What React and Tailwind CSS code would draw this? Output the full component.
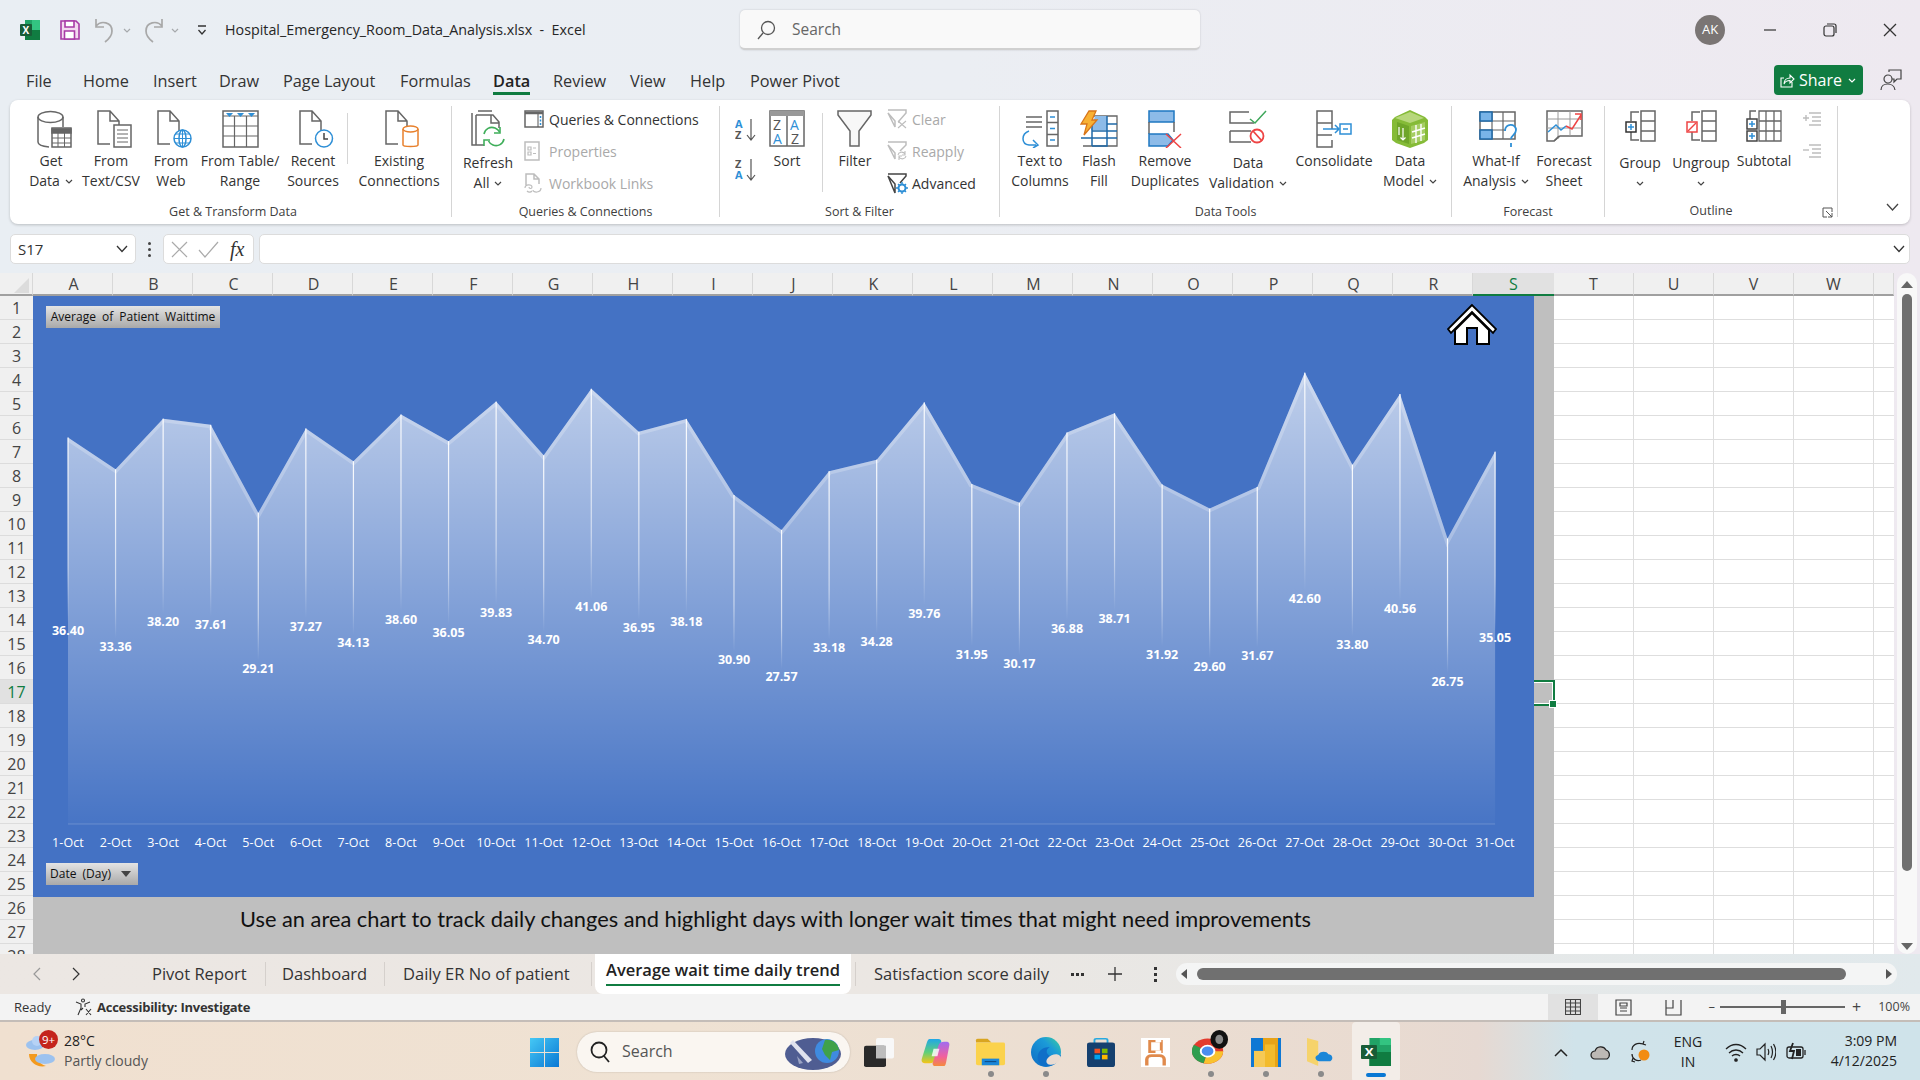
import React from 'react'

const G = '#666666'
const BLUE = '#2e8fd6'

const values = [36.40,33.36,38.20,37.61,29.21,37.27,34.13,38.60,36.05,39.83,34.70,41.06,36.95,38.18,30.90,27.57,33.18,34.28,39.76,31.95,30.17,36.88,38.71,31.92,29.60,31.67,42.60,33.80,40.56,26.75,35.05]
const cols = ['A','B','C','D','E','F','G','H','I','J','K','L','M','N','O','P','Q','R','S']
const rows = Array.from({ length: 28 }, (_, i) => i + 1)

const Svg = ({ w, h, children, className = '', stroke = G, sw = 1.5 }) => (
  <svg width={w} height={h} viewBox={`0 0 ${w} ${h}`} fill="none" stroke={stroke} strokeWidth={sw} className={`shrink-0 ${className}`}>
    {children}
  </svg>
)

const Caret = ({ className = '' }) => (
  <svg width="8" height="5" viewBox="0 0 8 5" fill="none" stroke="#444" strokeWidth="1.2" className={`inline-block ${className}`}><path d="M1 1l3 3 3-3" /></svg>
)

const Doc = ({ x = 0, y = 0, h = 34 }) => (
  <path d={`M${x + 22} ${y + 27}V${y + 11}l-9-10H${x + 1}V${y + h}h12 M${x + 13} ${y + 1}v10h9`} />
)

const GetDataIcon = () => (
  <Svg w={35} h={38}>
    <ellipse cx="13.5" cy="7" rx="12.5" ry="5.5" />
    <path d="M1 7v25c0 3 6 4.500 11 5M26 7v10" />
    <rect x="15" y="18" width="19" height="19" fill="#fff" />
    <path d="M15 19h19v4H15z" fill={G} />
    <path d="M15 28h19M15 33h19M21 23v14M27.5 23v14" strokeWidth="1" />
  </Svg>
)
const TextCsvIcon = () => (
  <Svg w={35} h={38}>
    <Doc />
    <path d="M17 15h17v22H17z" fill="#fff" />
    <path d="M20 20h11M20 24h11M20 28h11M20 32h11" strokeWidth="1" />
  </Svg>
)
const WebIcon = () => (
  <Svg w={35} h={38}>
    <Doc />
    <g stroke={BLUE}>
      <circle cx="25.5" cy="28.5" r="8.5" fill="#fff" />
      <ellipse cx="25.5" cy="28.5" rx="3.5" ry="8.5" />
      <path d="M17 28.5h17M18.5 24h14M18.5 33h14M25.5 20v17" strokeWidth="1" />
    </g>
  </Svg>
)
const TableIcon = () => (
  <Svg w={37} h={38}>
    <rect x="1" y="1" width="35" height="36" />
    <path d="M1 6h35M1 16h35M1 26h35M12.5 6v31M24.5 6v31" strokeWidth="1.2" />
    <path d="M4 3h7l-3.5 4zM15 3h7l-3.5 4zM26 3h7l-3.5 4z" fill={BLUE} stroke="none" />
  </Svg>
)
const RecentIcon = () => (
  <Svg w={35} h={38}>
    <Doc />
    <circle cx="25" cy="28.5" r="8.5" fill="#fff" stroke={BLUE} />
    <path d="M25 23v6h4" stroke="#444" />
  </Svg>
)
const ExistingIcon = () => (
  <Svg w={35} h={38}>
    <Doc />
    <g stroke="#e8802c" fill="#fff">
      <path d="M18 19v16c0 2 15 2 15 0V19" />
      <ellipse cx="25.5" cy="19" rx="7.5" ry="3" />
    </g>
  </Svg>
)
const RefreshIcon = () => (
  <Svg w={35} h={38}>
    <path d="M7 1h14M1 3v32h5M5 5v30h8M5 5h17l6 7v6M20 5v8h8" />
    <g stroke="#3fae5a" strokeWidth="1.6">
      <path d="M13 24c1-5 6-8 11-6 2 .8 3.5 2 4.5 4M33 29c-1 5-6 8-11 6-2-.8-3.5-2-4.5-4" />
      <path d="M29 17v6h-6M13 36v-6h6" />
    </g>
  </Svg>
)
const QueriesIcon = () => (
  <Svg w={20} h={18}>
    <rect x="1" y="1" width="18" height="16" />
    <path d="M1 3h18" strokeWidth="2.5" />
    <path d="M14 4v13" stroke="#555" strokeWidth="1" />
    <path d="M16.5 6v2M16.5 9.5v2M16.5 13v2" stroke={BLUE} strokeWidth="1.5" />
  </Svg>
)
const PropsIcon = () => (
  <Svg w={16} h={20} stroke="#bdbdbd">
    <rect x="1" y="1" width="14" height="18" />
    <path d="M4 6h3v3H4zM9 7h3M4 11h3v3H4zM9 12.5h3" strokeWidth="1.2" />
  </Svg>
)
const LinksIcon = () => (
  <Svg w={18} h={20} stroke="#bdbdbd">
    <path d="M2 12V1h8l5 5v5M10 1v5h5" />
    <path d="M1 15c0-4 7-4 7-1 0 2-3 2-3 0M17 15c0 5-8 5-8 2M3 18c2 2 4 1 5 0" strokeWidth="1.2" />
  </Svg>
)
const SortAz = ({ top, bottom }) => (
  <svg width="22" height="24" viewBox="0 0 22 24" className="shrink-0">
    <text x="0" y="10" fontSize="11" fontWeight="700" fontFamily="'Open Sans'" fill={top === 'A' ? BLUE : '#555'}>{top}</text>
    <text x="0" y="21" fontSize="11" fontWeight="700" fontFamily="'Open Sans'" fill={bottom === 'A' ? BLUE : '#555'}>{bottom}</text>
    <path d="M16 1v21M12 17l4 5 4-5" fill="none" stroke="#555" strokeWidth="1.2" />
  </svg>
)
const SortIcon = () => (
  <svg width="36" height="37" viewBox="0 0 36 37" className="shrink-0">
    <rect x="1" y="1" width="34" height="35" fill="#fff" stroke={G} strokeWidth="1.5" />
    <rect x="1" y="1" width="34" height="5" fill="#999" />
    <path d="M18 6v30" stroke={G} strokeWidth="1.5" />
    <text x="4" y="20" fontSize="14" fontFamily="'Open Sans'" fill="#555">Z</text>
    <text x="4" y="34" fontSize="14" fontFamily="'Open Sans'" fill={BLUE}>A</text>
    <text x="21" y="20" fontSize="14" fontFamily="'Open Sans'" fill={BLUE}>A</text>
    <text x="22" y="34" fontSize="14" fontFamily="'Open Sans'" fill="#555">Z</text>
  </svg>
)
const FilterIcon = () => (
  <Svg w={36} h={37}>
    <path d="M1 1h33v4L22 21v15h-9V21L1 5z" fill="#f7f7f7" />
  </Svg>
)
const ClearIcon = () => (
  <Svg w={21} h={20} stroke="#bdbdbd">
    <path d="M1 1h18v3l-7 8v2M8 18v-6L1 4z" />
    <path d="M11 12l8 7M19 12l-8 7" strokeWidth="1.1" />
  </Svg>
)
const ReapplyIcon = () => (
  <Svg w={21} h={20} stroke="#bdbdbd">
    <path d="M1 1h18v3l-6 6M8 18v-6L1 4z" />
    <path d="M11 14c.5-3 5-4 7-1M19 15c-.5 3-5 4-7 1M18 10v4h-3M12 19v-4h3" strokeWidth="1.1" />
  </Svg>
)
const AdvancedIcon = () => (
  <Svg w={21} h={21} stroke="#444">
    <path d="M1 1h18v2l-6 7M8 20v-9L1 3z" />
    <circle cx="15" cy="15" r="3.5" stroke={BLUE} strokeWidth="2" />
    <path d="M15 9v3M15 18v3M9 15h3M18 15h3M11 11l2 2M17 17l2 2M19 11l-2 2M13 17l-2 2" stroke={BLUE} strokeWidth="1.4" />
  </Svg>
)
const TextColsIcon = () => (
  <Svg w={38} h={38}>
    <rect x="26" y="1" width="11" height="35" fill="#fff" />
    <path d="M26 12.5h11M26 24.5h11" />
    <path d="M29 7h5M29 18.5h5M29 30h5" stroke={BLUE} />
    <path d="M5 7h16M5 12h16M5 17h16" strokeWidth="1.3" />
    <path d="M8 21c-8 3-8 13 0 14h7M12 30l5 5-5 3" stroke={BLUE} />
  </Svg>
)
const FlashIcon = () => (
  <Svg w={38} h={38}>
    <path d="M11 6h26v30H3" strokeWidth="1.3" />
    <path d="M15 6h12v14H11z" fill="#8dbbe8" stroke="none" />
    <path d="M12 21h15M12 6v30M27 6v30h-15M1 28h36M27 21h10M27 14h10" stroke="#1f6aa8" strokeWidth="1.5" />
    <path d="M9 1h7l-4 9h5L4 25l3-11H1z" fill="#f8b133" stroke="#d8751a" strokeWidth="1.3" />
  </Svg>
)
const RemoveDupIcon = () => (
  <Svg w={34} h={38} stroke="#1f78c1">
    <path d="M1 1h25v11H1z" fill="#8dbbe8" />
    <path d="M1 12v12M26 12v10" stroke={G} />
    <path d="M1 24h19l5 6-5 6H1z" fill="#8dbbe8" />
    <path d="M18 24l15 14M33 24L18 38" stroke="#ee4444" />
  </Svg>
)
const ValidationIcon = () => (
  <Svg w={38} h={36}>
    <path d="M20 2H1v11h24M1 21h21M1 21v11h21" />
    <path d="M21 9l5 4L37 1" stroke="#3fa75b" />
    <circle cx="28" cy="26" r="6.5" stroke="#ee4444" strokeWidth="1.8" />
    <path d="M24 21l9 10" stroke="#ee4444" strokeWidth="1.8" />
  </Svg>
)
const ConsolidateIcon = () => (
  <Svg w={36} h={38}>
    <path d="M1 1h15v12H1zM1 13v12h15M1 25v12h15V30M16 13v6" />
    <path d="M7 19h16M19 15l4 4-4 4" stroke={BLUE} />
    <rect x="24" y="14" width="11" height="10" fill="#fff" stroke={BLUE} />
    <path d="M27 19h5" stroke={BLUE} />
  </Svg>
)
const ModelIcon = () => (
  <svg width="36" height="38" viewBox="0 0 36 38" className="shrink-0">
    <path d="M3 7L18 0l15 7 3 3v20l-4 3-14 5-14-5-4-3V10z" fill="#85bb37" />
    <path d="M3 8L18 2l14 6-14 5z" fill="#b7d77c" />
    <path d="M5 12l12 4v18L5 30z" fill="#6fa62a" />
    <path d="M19 16l14-4v18l-14 4z" fill="#a5cd63" />
    <path d="M20 22l13-4M20 28l13-4M24 15v18M29 14v17" stroke="#fff" strokeWidth="1.4" fill="none" />
    <path d="M11 18v12M8.5 27.5L11 30l2.5-2.5M7 17v8" stroke="#fff" strokeWidth="1.2" fill="none" />
  </svg>
)
const WhatIfIcon = () => (
  <Svg w={38} h={38}>
    <rect x="1" y="2" width="35" height="27" />
    <path d="M13 2v27M24 2v27M1 11h35M1 20h35" strokeWidth="1.2" />
    <path d="M1 2h12v9H1zM1 20h12v9H1z" fill="#79b4e8" stroke="#1f6aa8" />
    <path d="M26 21c0-8 11-8 11-1 0 5-5 5-5 9M32 33v4" stroke={BLUE} strokeWidth="1.8" fill="#fff" />
  </Svg>
)
const ForecastIcon = () => (
  <Svg w={37} h={38}>
    <path d="M1 1h35v25H14l-6 5H1z" />
    <path d="M12 1v28M24 1v25M1 9h35M1 18h35" strokeWidth="1" stroke="#9a9a9a" />
    <path d="M2 22l8-7 5 5 5-4" stroke={BLUE} />
    <path d="M20 16l6 3 9-14M29 4h6v6" stroke="#ee4444" />
    <path d="M8 31l5-5" />
  </Svg>
)
const Bracket = ({ tint }) => (
  <Svg w={31} h={32}>
    <path d="M14 2H6v9M6 20v10h8" />
    <rect x="16" y="1" width="14" height="30" fill="#fff" />
    <path d="M16 11h14M16 21h14" />
    {tint === 'plus' ? (
      <>
        <rect x="1" y="12" width="10" height="10" fill="#fff" stroke="#333" />
        <path d="M3 17h6M6 14v6" stroke={BLUE} />
      </>
    ) : (
      <>
        <rect x="1" y="12" width="10" height="10" fill="#fff" stroke="#ee4444" />
        <path d="M2 21l8-8" stroke="#ee4444" />
      </>
    )}
  </Svg>
)
const SubtotalIcon = () => (
  <Svg w={36} h={32}>
    <path d="M13 1h22v30H13zM13 11h22M13 21h22M20 1v30M28 1v30" strokeWidth="1.3" />
    <path d="M10 1H4v9" />
    <rect x="1" y="9" width="10" height="10" fill="#fff" stroke="#444" />
    <rect x="1" y="21" width="10" height="10" fill="#fff" stroke="#444" />
    <path d="M3 14h6M6 11v6M3 26h6M6 23v6" stroke={BLUE} />
  </Svg>
)
const ShowDetail = ({ minus }) => (
  <Svg w={18} h={14} stroke="#bdbdbd">
    <path d={minus ? 'M0 6h6' : 'M0 6h6M3 3v6'} strokeWidth="1.4" />
    <path d="M6 1h12M9 5h9M9 9h9M6 13h12" strokeWidth="1.3" />
  </Svg>
)

// one big ribbon button, label lines under the icon
const Big = ({ w, icon, lines, caret, below, iconClass = '' }) => (
  <div className={`flex flex-col items-center pt-1 ${w}`}>
    <div className={`flex h-[41px] w-full justify-center ${iconClass}`}>{icon}</div>
    <div className="flex flex-col items-center leading-[20px] whitespace-nowrap">
      {lines.map((l, i) => (
        <div key={l} className="flex items-center gap-[5px]">
          <span>{l}</span>
          {caret && i === lines.length - 1 && <Caret />}
        </div>
      ))}
      {below && <div className="flex h-5 items-center"><Caret /></div>}
    </div>
  </div>
)

const Small = ({ icon, label, off }) => (
  <div className={`flex h-7 items-center whitespace-nowrap ${off ? 'text-[#a9a9a9]' : ''}`}>
    <div className="flex w-[25px] shrink-0 justify-start">{icon}</div>
    <span>{label}</span>
  </div>
)

const Group = ({ w, label, children, labelClass = '' }) => (
  <div className={`flex h-[111px] shrink-0 flex-col border-r-[1.5px] border-[#d5d5d5] ${w}`}>
    <div className="flex h-[98px] shrink-0">{children}</div>
    <div className={`h-4 shrink-0 text-center text-[12.5px] leading-4 text-[#404040] ${labelClass}`}>{label}</div>
  </div>
)

const menu = [['File', 'w-[57px] ml-[26px]'], ['Home', 'w-[70px]'], ['Insert', 'w-[66px]'], ['Draw', 'w-[64px]'], ['Page Layout', 'w-[117px]'], ['Formulas', 'w-[93px]'], ['Data', 'w-[60px]'], ['Review', 'w-[77px]'], ['View', 'w-[60px]'], ['Help', 'w-[60px]'], ['Power Pivot', 'w-[100px]']]

const TitleBar = () => (
  <div className="flex h-[60px] items-center">
    <svg width="20" height="20" viewBox="0 0 20 20" className="ml-5 shrink-0">
      <path d="M5 0h14a1 1 0 011 1v18a1 1 0 01-1 1H5z" fill="#21a366" />
      <path d="M12 0h7a1 1 0 011 1v9h-8z" fill="#33c481" />
      <path d="M5 10h15v10H5z" fill="#107c41" />
      <rect x="0" y="4" width="12" height="12" rx="1" fill="#185c37" />
      <text x="2.5" y="13.5" fontSize="10" fontWeight="700" fill="#fff" fontFamily="'Open Sans'">X</text>
    </svg>
    <svg width="20" height="20" viewBox="0 0 20 20" fill="none" stroke="#a83aa6" strokeWidth="1.6" className="ml-5 shrink-0">
      <path d="M1 1h15l3 3v15H1z" fill="#f3d9f0" />
      <path d="M5 1h9v6H5zM4.5 11h10v8h-10z" fill="#fff" />
    </svg>
    <svg width="19" height="26" viewBox="0 0 19 26" fill="none" stroke="#a8a8a8" strokeWidth="1.7" className="ml-[15px] shrink-0">
      <path d="M1 2v8h8M1 9c5-6 16-4 16 5 0 4-3 8-7 11" />
    </svg>
    <Caret className="ml-[9px] opacity-40" />
    <svg width="19" height="26" viewBox="0 0 19 26" fill="none" stroke="#a8a8a8" strokeWidth="1.7" className="ml-[13px] shrink-0">
      <path d="M18 2v8h-8M18 9C13 3 2 5 2 14c0 4 3 8 7 11" />
    </svg>
    <Caret className="ml-[8px] opacity-40" />
    <svg width="10" height="11" viewBox="0 0 10 11" fill="none" stroke="#333" strokeWidth="1.3" className="ml-[18px] shrink-0">
      <path d="M1 1h8M1.5 5l3.5 4 3.5-4" />
    </svg>
    <div className="ml-[18px] w-[515px] text-[14.3px] whitespace-nowrap text-[#262626]">Hospital_Emergency_Room_Data_Analysis.xlsx&nbsp; - &nbsp;Excel</div>
    <div className="flex h-10 w-[460px] items-center rounded-[5px] border-b-2 border-b-[#d0d0d0] bg-[#f9f9f9] pt-[1px] shadow-[0_0_2px_rgba(0,0,0,0.18)]">
      <svg width="19" height="20" viewBox="0 0 19 20" fill="none" stroke="#555" strokeWidth="1.3" className="ml-[17px]">
        <circle cx="11" cy="8" r="6.5" /><path d="M6 13l-5 6" />
      </svg>
      <span className="ml-[16px] text-[15.5px] text-[#666]">Search</span>
    </div>
    <div className="ml-[495px] flex h-[30px] w-[30px] items-center justify-center rounded-full bg-[#7a7574] text-[13px] text-white">AK</div>
    <svg width="14" height="14" viewBox="0 0 14 14" fill="none" stroke="#333" strokeWidth="1.2" className="ml-[38px]"><path d="M1 7h12" /></svg>
    <svg width="14" height="14" viewBox="0 0 14 14" fill="none" stroke="#333" strokeWidth="1.2" className="ml-[46px]"><rect x="1" y="3" width="10" height="10" rx="2" /><path d="M4 1h7a2 2 0 012 2v7" /></svg>
    <svg width="14" height="14" viewBox="0 0 14 14" fill="none" stroke="#333" strokeWidth="1.3" className="ml-[46px]"><path d="M1 1l12 12M13 1L1 13" /></svg>
  </div>
)

const MenuBar = () => (
  <div className="flex h-10 items-center text-[16.3px] text-[#333]">
    {menu.map(([m, w]) => (
      <div key={m} className={`${w} relative top-[1px] whitespace-nowrap ${m === 'Data' ? 'font-semibold text-[#222]' : ''}`}>
        {m}
        {m === 'Data' && <div className="absolute top-[23px] left-0 h-[3px] w-[37px] bg-[#107c41]" />}
      </div>
    ))}
    <div className="ml-[924px] flex h-[30px] w-[89px] items-center rounded-[4px] bg-[#107c41] pl-[6px] text-[16px] font-medium text-white">
      <svg width="15" height="15" viewBox="0 0 15 15" fill="none" stroke="#fff" strokeWidth="1.1"><path d="M4 5H1v9h11V9M4 11c0-4 3-6 6-6V2l4 4-4 4V7.5c-2 0-5 1-6 3.5z" /></svg>
      <span className="ml-[4px]">Share</span>
      <svg width="8" height="5" viewBox="0 0 8 5" fill="none" stroke="#fff" strokeWidth="1.2" className="ml-[6px]"><path d="M1 1l3 3 3-3" /></svg>
    </div>
    <svg width="22" height="22" viewBox="0 0 22 22" fill="none" stroke="#444" strokeWidth="1.2" className="ml-[17px]">
      <circle cx="8" cy="10" r="4" /><path d="M1 21c0-8 13-8 14 0M9 3V1h12v9h-4l-3 3v-3h-2" />
    </svg>
  </div>
)

const Ribbon = () => (
  <div className="relative mx-[10px] flex h-[124px] rounded-[8px] bg-white pt-[6px] text-[14px] text-[#333] shadow-[0_1px_3px_rgba(0,0,0,0.2)]">
    <Group w="w-[442px]" label="Get & Transform Data" labelClass="pl-[5px]">
      <div className="w-[11px]" />
      <Big w="w-[60px]" icon={<GetDataIcon />} iconClass="pl-[6px]" lines={['Get', 'Data']} caret />
      <Big w="w-[60px]" icon={<TextCsvIcon />} iconClass="pl-[6px]" lines={['From', 'Text/CSV']} />
      <Big w="w-[60px]" icon={<WebIcon />} iconClass="pl-[6px]" lines={['From', 'Web']} />
      <Big w="w-[78px]" icon={<TableIcon />} lines={['From Table/', 'Range']} />
      <Big w="w-[68px]" icon={<RecentIcon />} iconClass="pl-[6px]" lines={['Recent', 'Sources']} />
      <div className="mt-[7px] h-[51px] border-l-[1.5px] border-[#d5d5d5]" />
      <Big w="w-[102px]" icon={<ExistingIcon />} iconClass="pl-[6px]" lines={['Existing', 'Connections']} />
    </Group>
    <Group w="w-[268px]" label="Queries & Connections">
      <Big w="w-[72px]" icon={<RefreshIcon />} iconClass="h-[43px]" lines={['Refresh', 'All']} caret />
      <div className="-mt-[1px] flex flex-col gap-1">
        <Small icon={<QueriesIcon />} label="Queries & Connections" />
        <Small icon={<PropsIcon />} label="Properties" off />
        <Small icon={<LinksIcon />} label="Workbook Links" off />
      </div>
    </Group>
    <Group w="w-[280px]" label="Sort & Filter">
      <div className="ml-[15px] flex flex-col gap-4 pt-[12px]">
        <SortAz top="A" bottom="Z" />
        <SortAz top="Z" bottom="A" />
      </div>
      <Big w="w-[65px] pr-[5px]" icon={<SortIcon />} lines={['Sort']} />
      <div className="mt-[7px] h-[79px] border-l-[1.5px] border-[#d5d5d5]" />
      <Big w="w-[64px]" icon={<FilterIcon />} lines={['Filter']} />
      <div className="-mt-[1px] flex flex-col gap-1">
        <Small icon={<ClearIcon />} label="Clear" off />
        <Small icon={<ReapplyIcon />} label="Reapply" off />
        <Small icon={<AdvancedIcon />} label="Advanced" />
      </div>
    </Group>
    <Group w="w-[452px]" label="Data Tools">
      <div className="w-[5px]" />
      <Big w="w-[70px]" icon={<TextColsIcon />} lines={['Text to', 'Columns']} />
      <Big w="w-[48px]" icon={<FlashIcon />} lines={['Flash', 'Fill']} />
      <Big w="w-[84px]" icon={<RemoveDupIcon />} lines={['Remove', 'Duplicates']} />
      <Big w="w-[82px]" icon={<ValidationIcon />} iconClass="h-[43px]" lines={['Data', 'Validation']} caret />
      <Big w="w-[90px]" icon={<ConsolidateIcon />} lines={['Consolidate']} />
      <Big w="w-[62px]" icon={<ModelIcon />} lines={['Data', 'Model']} caret />
    </Group>
    <Group w="w-[153px]" label="Forecast">
      <div className="w-[10px]" />
      <Big w="w-[68px]" icon={<WhatIfIcon />} iconClass="pl-[4px]" lines={['What-If', 'Analysis']} caret />
      <Big w="w-[68px]" icon={<ForecastIcon />} lines={['Forecast', 'Sheet']} />
    </Group>
    <Group w="w-[233px]" label="Outline" labelClass="-mt-[1px] pr-[20px]">
      <Big w="w-[70px]" icon={<Bracket tint="plus" />} iconClass="h-[43px]" lines={['Group']} below />
      <Big w="w-[52px]" icon={<Bracket tint="minus" />} iconClass="h-[43px]" lines={['Ungroup']} below />
      <Big w="w-[74px]" icon={<SubtotalIcon />} lines={['Subtotal']} />
      <div className="ml-[2px] flex flex-col gap-[18px] pt-[6px]">
        <ShowDetail />
        <ShowDetail minus />
      </div>
    </Group>
    <svg width="11" height="11" viewBox="0 0 11 11" fill="none" stroke="#555" strokeWidth="1" className="absolute top-[107px] left-[1812px]"><path d="M10 5V1H1v9h4M4 4l6 6M6 10h4V6" /></svg>
    <svg width="13" height="8" viewBox="0 0 13 8" fill="none" stroke="#444" strokeWidth="1.3" className="absolute top-[103px] left-[1876px]"><path d="M1 1l5.5 6L12 1" /></svg>
  </div>
)

const FormulaBar = () => (
  <div className="mt-[10px] flex h-[30px] items-center pl-[10px] text-[15px] text-[#333]">
    <div className="flex h-full w-[126px] items-center justify-between rounded-[5px] border border-[#dcdcdc] bg-white px-[7px]">
      <span>S17</span>
      <svg width="12" height="8" viewBox="0 0 12 8" fill="none" stroke="#333" strokeWidth="1.3"><path d="M1 1l5 5.5L11 1" /></svg>
    </div>
    <div className="flex w-[27px] flex-col items-center gap-[3px]">
      <i className="h-[3px] w-[3px] rounded-full bg-[#444]" /><i className="h-[3px] w-[3px] rounded-full bg-[#444]" /><i className="h-[3px] w-[3px] rounded-full bg-[#444]" />
    </div>
    <div className="flex h-full w-[91px] items-center rounded-[5px] border border-[#dcdcdc] bg-white pl-[7px]">
      <svg width="17" height="17" viewBox="0 0 17 17" fill="none" stroke="#aaa" strokeWidth="1.2"><path d="M1 1l15 15M16 1L1 16" /></svg>
      <svg width="21" height="17" viewBox="0 0 21 17" fill="none" stroke="#aaa" strokeWidth="1.2" className="ml-[10px]"><path d="M1 9l6 7L20 1" /></svg>
      <span className="ml-[11px] font-['Liberation_Serif',serif] text-[20px] leading-none text-[#333] italic">fx</span>
    </div>
    <div className="ml-[5px] flex h-full w-[1651px] items-center justify-end rounded-[5px] border border-[#dcdcdc] bg-white pr-[4px]">
      <svg width="12" height="8" viewBox="0 0 12 8" fill="none" stroke="#333" strokeWidth="1.3"><path d="M1 1l5 5.5L11 1" /></svg>
    </div>
  </div>
)

const ColHeader = () => (
  <div className="flex h-[23px] text-[16px] leading-[23px] text-[#444]">
    <div className="relative h-full w-[33px] border-r border-b-2 border-r-[#d8d8d8] border-b-[#a0a0a0] bg-[#f0f0f0]">
      <svg width="16" height="16" viewBox="0 0 16 16" className="absolute top-[5px] left-[14px]"><path d="M15 0v15H0z" fill="#dcdcdc" /></svg>
    </div>
    {cols.map((c) => (
      <div key={c} className={c === 'S' ? 'h-full w-[81px] border-b-2 border-[#107c41] bg-[#e1e1e1] text-center text-[#107c41]' : 'h-full w-[80px] border-r border-b-2 border-r-[#d8d8d8] border-b-[#a0a0a0] bg-[#f0f0f0] pl-[2px] text-center'}>{c}</div>
    ))}
    {['T', 'U', 'V', 'W', ''].map((c) => (
      <div key={c} className={`h-full border-r border-b-2 border-r-[#d8d8d8] border-b-[#a0a0a0] bg-[#f0f0f0] text-center ${c ? 'w-[80px]' : 'w-[20px]'}`}>{c}</div>
    ))}
  </div>
)

const X0 = 35
const STEP = 47.57
const px = (i) => X0 + i * STEP
const py = (v) => 141.5 + (36.4 - v) * 10.46
const BASE = 528

const Chart = () => {
  const line = values.map((v, i) => `${px(i).toFixed(1)},${py(v).toFixed(1)}`).join(' ')
  const area = `${X0},${BASE} ${line} ${px(30).toFixed(1)},${BASE}`
  return (
    <svg width="1501" height="601" viewBox="0 0 1501 601" className="block">
      <defs>
        <linearGradient id="fade" gradientUnits="userSpaceOnUse" x1="0" y1="75" x2="0" y2="528">
          <stop offset="0" stopColor="#fff" stopOpacity="0.66" />
          <stop offset="1" stopColor="#fff" stopOpacity="0.02" />
        </linearGradient>
        <linearGradient id="drop" x1="0" y1="0" x2="0" y2="1">
          <stop offset="0" stopColor="#fff" stopOpacity="0.95" />
          <stop offset="0.7" stopColor="#fff" stopOpacity="0.55" />
          <stop offset="1" stopColor="#fff" stopOpacity="0" />
        </linearGradient>
        <clipPath id="areaclip"><polygon points={area} /></clipPath>
      </defs>
      <polygon points={area} fill="url(#fade)" />
      <polyline points={line} fill="none" stroke="#fff" strokeOpacity="0.22" strokeWidth="7" clipPath="url(#areaclip)" />
      <path d={`M${X0} ${BASE}H${px(30)}`} stroke="#fff" strokeOpacity="0.2" />
      {values.map((v, i) => {
        const y = py(v)
        return <rect key={i} x={px(i) - 0.6} y={y} width="1.2" height={(BASE - y) / 2 - 8} fill="url(#drop)" />
      })}
      <g className="font-['Open_Sans']" fill="#fff" textAnchor="middle">
        {values.map((v, i) => (
          <text key={i} x={px(i)} y={(py(v) + BASE) / 2 + 4.5} fontSize="12.5" fontWeight="700">{v.toFixed(2)}</text>
        ))}
        {values.map((v, i) => (
          <text key={i} x={px(i)} y="551" fontSize="12.5" fontWeight="500" letterSpacing="0.1">{i + 1}-Oct</text>
        ))}
      </g>
      <g transform="translate(1415 8)">
        <path d="M24 1L0 25l3 4 21-21 21 21 3-4z" fill="#fff" stroke="#000" strokeWidth="1.8" />
        <path d="M7 26L24 9l17 17v14H29V24h-10v16H7z" fill="#fff" stroke="#000" strokeWidth="2" />
      </g>
    </svg>
  )
}

const Sheet = () => (
  <div className="relative flex h-[658px] overflow-hidden">
    <div className="w-[33px] shrink-0 bg-[#f0f0f0]">
      {rows.map((r) => (
        <div key={r} className={`h-6 border-b border-[#dcdcdc] text-center text-[16px] leading-6 ${r === 17 ? 'bg-[#e1e1e1] text-[#107c41]' : 'text-[#444]'}`}>{r}</div>
      ))}
    </div>
    <div className="relative w-[1521px] shrink-0 bg-[#bfbfbf]">
      <div className="relative h-[601px] w-[1501px] bg-[#4472c4]">
        <Chart />
        <div className="absolute top-[10px] left-[13px] flex h-[22px] w-[174px] items-center justify-center bg-gradient-to-b from-[#e4e4e4] to-[#a9a9a9] text-[12px] whitespace-nowrap text-[#111] [word-spacing:3px]">Average of Patient Waittime</div>
        <div className="absolute top-[567px] left-[13px] flex h-[22px] w-[92px] items-center bg-gradient-to-b from-[#e4e4e4] to-[#a9a9a9] pl-[4px] text-[12px] whitespace-nowrap text-[#111] [word-spacing:3px]">
          Date (Day)
          <span className="ml-[10px] h-0 w-0 border-x-[5px] border-t-[6px] border-x-transparent border-t-[#444]" />
        </div>
      </div>
      <div className="flex h-[44px] items-center pl-[207px] font-['Lato',sans-serif] text-[21.8px] whitespace-nowrap text-[#111]">Use an area chart to track daily changes and highlight days with longer wait times that might need improvements</div>
      <div className="absolute top-[384px] left-[1501px] h-[26px] w-[21px] border-y-2 border-r-2 border-y-[#107c41] border-r-[#107c41] shadow-[inset_0_1px_0_#fff,inset_-1px_0_0_#fff,inset_0_-1px_0_#fff]" />
      <div className="absolute top-[405px] left-[1517px] h-[6px] w-[6px] bg-[#107c41] ring-1 ring-white" />
    </div>
    <div className="w-[340px] shrink-0 bg-white">
      {rows.map((r) => (
        <div key={r} className="flex h-6 border-b border-[#dedede]">
          <div className="w-[80px] border-r border-[#dedede]" />
          <div className="w-[80px] border-r border-[#dedede]" />
          <div className="w-[80px] border-r border-[#dedede]" />
          <div className="w-[80px] border-r border-[#dedede]" />
          <div className="w-[20px]" />
        </div>
      ))}
    </div>
  </div>
)

const VScroll = () => (
  <div className="flex w-[26px] shrink-0 justify-center">
    <div className="flex h-[681px] w-5 flex-col items-center rounded-full bg-[#f8f8f8]">
      <span className="mt-[8px] h-0 w-0 border-x-[6px] border-b-[7px] border-x-transparent border-b-[#666]" />
      <div className="mt-[6px] h-[577px] w-[10px] rounded-full bg-[#707070]" />
      <span className="mt-auto mb-[4px] h-0 w-0 border-x-[6px] border-t-[7px] border-x-transparent border-t-[#666]" />
    </div>
  </div>
)

const Tabs = () => (
  <div className="flex h-10 items-center bg-gradient-to-r from-[#ece7e3] via-[#ebe7e3] to-[#e1e9ec] text-[16.5px] whitespace-nowrap text-[#333]">
    <svg width="9" height="14" viewBox="0 0 9 14" fill="none" stroke="#999" strokeWidth="1.2" className="ml-[32px]"><path d="M8 1L2 7l6 6" /></svg>
    <svg width="9" height="14" viewBox="0 0 9 14" fill="none" stroke="#333" strokeWidth="1.2" className="ml-[31px]"><path d="M1 1l6 6-6 6" /></svg>
    <div className="ml-[71px] w-[113px] pt-[1px]">Pivot Report</div>
    <div className="h-[24px] border-l border-[#d5d0cc]" />
    <div className="w-[118px] pl-[16px] pt-[1px]">Dashboard</div>
    <div className="h-[24px] border-l border-[#d5d0cc]" />
    <div className="w-[206px] pl-[18px] pt-[1px]">Daily ER No of patient</div>
    <div className="h-[24px] border-l border-[#d5d0cc]" />
    <div className="relative ml-[3px] flex h-10 w-[256px] justify-center rounded-b-[8px] bg-white pt-[4px] font-semibold text-[#222]">
      Average wait time daily trend
      <div className="absolute bottom-[8px] left-[11px] h-[2.5px] w-[234px] bg-[#107c41]" />
    </div>
    <div className="ml-[4px] h-[24px] border-l border-[#d5d0cc]" />
    <div className="w-[215px] pl-[18px] pt-[1px]">Satisfaction score daily</div>
    <div className="flex gap-[2px]"><i className="h-[3px] w-[3px] bg-[#333]" /><i className="h-[3px] w-[3px] bg-[#333]" /><i className="h-[3px] w-[3px] bg-[#333]" /></div>
    <svg width="14" height="14" viewBox="0 0 14 14" stroke="#333" strokeWidth="1.3" className="ml-[24px]"><path d="M7 0v14M0 7h14" /></svg>
    <div className="ml-[32px] flex flex-col gap-[3px]"><i className="h-[3px] w-[3px] bg-[#333]" /><i className="h-[3px] w-[3px] bg-[#333]" /><i className="h-[3px] w-[3px] bg-[#333]" /></div>
    <div className="ml-[19px] flex h-[22px] w-[721px] items-center rounded-full bg-[#f4f5f5] px-[5px]">
      <span className="h-0 w-0 border-y-[5px] border-r-[6px] border-y-transparent border-r-[#555]" />
      <div className="ml-[10px] h-3 w-[649px] rounded-full bg-[#707070]" />
      <span className="ml-auto h-0 w-0 border-y-[5px] border-l-[6px] border-y-transparent border-l-[#555]" />
    </div>
  </div>
)

const StatusBar = () => (
  <div className="flex h-[28px] items-center border-b-2 border-[#c4bdb8] bg-[#f3f3f3] text-[13px] text-[#333]">
    <span className="ml-[14px] pt-[1px]">Ready</span>
    <svg width="18" height="18" viewBox="0 0 18 18" fill="none" stroke="#333" strokeWidth="1.1" className="ml-[24px]">
      <circle cx="8" cy="2.5" r="1.5" /><path d="M1 4l5 2v4l-3 7M15 4l-5 2v3M6 12l2-2M11 11l5 6M16 11l-5 6" />
    </svg>
    <span className="ml-[4px] pt-[1px] font-bold tracking-[-0.25px]">Accessibility: Investigate</span>
    <div className="ml-auto flex h-full items-center">
      <div className="flex h-full w-[50px] items-center justify-center bg-[#e1e1e1]">
        <svg width="16" height="16" viewBox="0 0 16 16" fill="none" stroke="#444" strokeWidth="1.1"><path d="M.5.5h15v15H.5zM.5 4h15M.5 8h15M.5 12h15M5.5.5v15M10.5.5v15" /></svg>
      </div>
      <svg width="17" height="17" viewBox="0 0 17 17" fill="none" stroke="#444" strokeWidth="1.2" className="ml-[17px]"><path d="M1 1h15v15H1zM5 4h7v3H5zM5 9h7M5 12h7" /></svg>
      <svg width="17" height="17" viewBox="0 0 17 17" fill="none" stroke="#444" strokeWidth="1.2" className="ml-[33px]"><path d="M1 1v15h15V1M8 1v8H1" /></svg>
      <span className="ml-[27px] text-[#444]">–</span>
      <div className="relative ml-[5px] h-[1.5px] w-[125px] bg-[#666]">
        <div className="absolute -top-[6px] left-[61px] h-[14px] w-[5px] bg-[#666]" />
      </div>
      <span className="ml-[7px] text-[16px] text-[#444]">+</span>
      <span className="mr-[10px] ml-[17px] text-[12.5px] text-[#444]">100%</span>
    </div>
  </div>
)

const Slot = ({ w = 'w-[55px]', dot, children }) => (
  <div className={`relative flex h-[60px] shrink-0 items-center justify-center ${w}`}>
    {children}
    {dot && <i className="absolute top-[49px] h-[6px] w-[6px] rounded-full bg-[#8a8a8a]" />}
  </div>
)

const Taskbar = () => (
  <div className="flex h-[60px] items-center bg-[linear-gradient(90deg,#f0e0d0_0%,#efe2d3_35%,#e9dbd1_72%,#e6d9d2_77%,#d0e3ea_82%,#cfe3ea_100%)] text-[14px] whitespace-nowrap text-[#222]">
    <div className="relative ml-[25px] h-[60px] w-[39px]">
      <svg width="32" height="36" viewBox="0 0 32 36" className="absolute top-[11px] left-[1px]">
        <ellipse cx="9" cy="12" rx="9" ry="5" fill="#9cc2ef" /><circle cx="11" cy="8" r="5" fill="#b6d2f5" />
        <path d="M3 21c0 9 9 14 17 12-6-2-9-6-9-12z" fill="#f39a1e" />
        <ellipse cx="19" cy="26" rx="10" ry="5" fill="#9cc2ef" />
      </svg>
      <div className="absolute top-[8px] left-[14px] flex h-[19px] w-[19px] items-center justify-center rounded-full bg-[#c4241c] text-[11.5px] leading-none text-white">9+</div>
    </div>
    <div className="-mt-[2px] flex w-[466px] flex-col leading-[20px]">
      <span>28°C</span>
      <span className="text-[#555]">Partly cloudy</span>
    </div>
    <svg width="29" height="29" viewBox="0 0 29 29" className="shrink-0">
      <defs><linearGradient id="win" x1="0" y1="0" x2="1" y2="1"><stop offset="0" stopColor="#45c8f5" /><stop offset="1" stopColor="#0a78d4" /></linearGradient></defs>
      <path d="M0 0h14v14H0zM15 0h14v14H15zM0 15h14v14H0zM15 15h14v14H15z" fill="url(#win)" />
    </svg>
    <div className="ml-[18px] flex h-10 w-[273px] items-center rounded-full bg-[#faf6f1] shadow-[0_0_2px_rgba(0,0,0,0.2)]">
      <svg width="20" height="22" viewBox="0 0 20 22" fill="none" stroke="#222" strokeWidth="1.8" className="ml-[13px]"><circle cx="9" cy="9" r="7.5" /><path d="M14 15l5 6" /></svg>
      <span className="ml-[12px] pb-[2px] text-[16px] text-[#555]">Search</span>
      <svg width="60" height="36" viewBox="0 0 60 36" className="mr-[7px] ml-auto">
        <ellipse cx="30" cy="20" rx="28" ry="16" fill="#24377a" fillOpacity="0.8" />
        <circle cx="44" cy="17" r="12" fill="#3f8be0" />
        <path d="M42 6c7-1 13 3 14 10l-7 2-2 8-5-5-3-6z" fill="#3fa14a" />
        <path d="M10 6l19 20-4 3L7 9z" fill="#dfe2ee" />
        <path d="M14 22l6 7-4 1z" fill="#9aa3c4" />
      </svg>
    </div>
    <Slot w="w-[58px]">
      <svg width="30" height="29" viewBox="0 0 30 34" preserveAspectRatio="none"><rect x="12" y="0" width="18" height="24" rx="2" fill="#f8f8f8" /><rect x="0" y="9" width="22" height="25" rx="2" fill="#2a2a2a" /><rect x="12" y="9" width="10" height="15" fill="#bdbdbd" /></svg>
    </Slot>
    <Slot>
      <svg width="29" height="29" viewBox="0 0 30 30">
        <defs>
          <linearGradient id="copa" x1="0" y1="0" x2="0" y2="1"><stop offset="0" stopColor="#1fa7e8" /><stop offset="0.55" stopColor="#5fcf7a" /><stop offset="1" stopColor="#f5c518" /></linearGradient>
          <linearGradient id="copb" x1="0" y1="0" x2="0" y2="1"><stop offset="0" stopColor="#a06cf0" /><stop offset="0.6" stopColor="#f060a0" /><stop offset="1" stopColor="#f58a3c" /></linearGradient>
        </defs>
        <path d="M9 1h9c2 0 3 1 3 3l-6 18c-1 3-3 4-6 4H4c-3 0-4-2-3-5L6 5c.5-2 1.5-4 3-4z" fill="url(#copa)" />
        <path d="M24 29h-9c-2 0-3-1-3-3l6-18c1-3 3-4 6-4h2c3 0 4 2 3 5l-3 16c-.5 2-1 4-2 4z" fill="url(#copb)" />
        <path d="M13 11h6l-2 8h-6z" fill="#fff" fillOpacity="0.8" />
      </svg>
    </Slot>
    <Slot dot>
      <svg width="31" height="28" viewBox="0 0 32 38" preserveAspectRatio="none"><path d="M1 3a2 2 0 012-2h10l4 5H1z" fill="#d9a520" /><rect x="1" y="6" width="30" height="31" rx="2" fill="#fbd24c" /><rect x="7" y="28" width="18" height="9" fill="#1a86d8" /><path d="M10 32h12" stroke="#0d4f8a" strokeWidth="1.5" /></svg>
    </Slot>
    <Slot dot>
      <svg width="30" height="30" viewBox="0 0 32 32">
        <defs><linearGradient id="edge" x1="0" y1="1" x2="1" y2="0"><stop offset="0" stopColor="#0d6cc4" /><stop offset="0.65" stopColor="#1b9ad8" /><stop offset="1" stopColor="#3ed39a" /></linearGradient></defs>
        <circle cx="16" cy="16" r="16" fill="url(#edge)" />
        <path d="M32 19c-5 4-13 3-15-2-1-3 1-5 3-6-7-1-13 4-13 11 0 3 2 7 5 9l-2-1c8 4 19 0 22-11z" fill="#0f6fc8" />
        <ellipse cx="24" cy="24" rx="8" ry="5" transform="rotate(-25 24 24)" fill="#e9dbd1" />
      </svg>
    </Slot>
    <Slot>
      <svg width="28" height="29" viewBox="0 0 30 38" preserveAspectRatio="none"><path d="M8 8V3a2 2 0 012-2h10a2 2 0 012 2v5" fill="none" stroke="#27a9e0" strokeWidth="2" /><rect x="0" y="6" width="30" height="32" rx="3" fill="#15406f" /><path d="M8 14h6v6H8z" fill="#f25022" /><path d="M16 14h6v6h-6z" fill="#7fba00" /><path d="M8 22h6v6H8z" fill="#00a4ef" /><path d="M16 22h6v6h-6z" fill="#ffb900" /></svg>
    </Slot>
    <Slot>
      <svg width="29" height="29" viewBox="0 0 30 38" preserveAspectRatio="none"><rect width="30" height="38" fill="#fff" /><path d="M9 4h12v14H9z" fill="none" stroke="#e08a4c" strokeWidth="3" /><path d="M21 4h-6M21 18h-6" stroke="#fff" strokeWidth="3" /><path d="M6 36V28c0-3 2-5 5-5h8c3 0 5 2 5 5v8" fill="none" stroke="#e08a4c" strokeWidth="3.5" /></svg>
    </Slot>
    <Slot dot>
      <svg width="37" height="36" viewBox="0 0 38 46" preserveAspectRatio="none" className="-translate-y-[4px]"><circle cx="16" cy="27" r="16" fill="#e33b2e" /><path d="M16 27l16 0a16 16 0 01-20 15.5z" fill="#f9c22e" /><path d="M16 27L12 42.5A16 16 0 012 19z" fill="#2f9e4f" /><circle cx="16" cy="27" r="7" fill="#4a8df0" stroke="#fff" strokeWidth="2" /><ellipse cx="28" cy="12" rx="9" ry="12" fill="#111" /><ellipse cx="28" cy="12" rx="4" ry="6" fill="#8a8a8a" /></svg>
    </Slot>
    <Slot dot>
      <svg width="30" height="29" viewBox="0 0 30 36" preserveAspectRatio="none"><rect width="30" height="36" fill="#0f78d4" /><rect x="12" y="0" width="15" height="36" fill="#e8a317" /><rect x="3" y="16" width="11" height="20" fill="#f6c955" /><rect x="14" y="8" width="10" height="28" fill="#f3bb2c" /></svg>
    </Slot>
    <Slot dot>
      <svg width="28" height="28" viewBox="0 0 30 36" preserveAspectRatio="none"><path d="M0 0l12 4v32L0 30z" fill="#f6d36b" /><path d="M12 22c1-5 9-6 11-1 4 0 6 6 2 9H13c-5-1-5-7-1-8z" fill="#1a86d8" /></svg>
    </Slot>
    <div className="relative ml-[4px] flex h-[60px] w-[48px] shrink-0 items-center justify-center rounded-[4px] bg-[#f3ede8]">
      <svg width="30" height="28" viewBox="0 0 32 36" preserveAspectRatio="none"><path d="M9 0h21a2 2 0 012 2v32a2 2 0 01-2 2H9z" fill="#21a366" /><path d="M20 0h10a2 2 0 012 2v7H20z" fill="#33c481" /><path d="M9 18h23v18H9z" fill="#107c41" /><rect x="0" y="9" width="17" height="18" rx="1" fill="#185c37" /><text x="4" y="23" fontSize="14" fontWeight="700" fill="#fff" fontFamily="'Open Sans'">X</text></svg>
      <i className="absolute bottom-[5px] h-1 w-[20px] rounded-full bg-[#0a78d4]" />
    </div>
    <svg width="14" height="9" viewBox="0 0 14 9" fill="none" stroke="#222" strokeWidth="1.5" className="ml-[154px] shrink-0"><path d="M1 8l6-6 6 6" /></svg>
    <svg width="22" height="16" viewBox="0 0 22 16" className="ml-[22px] shrink-0"><path d="M5 15a4 4 0 010-8 6 6 0 0111-1 5 5 0 011 9z" fill="#bdb9b5" stroke="#222" strokeWidth="1.2" /></svg>
    <svg width="22" height="24" viewBox="0 0 22 24" fill="none" stroke="#222" strokeWidth="1.2" className="ml-[17px] shrink-0"><path d="M3 10c0-5 5-8 11-6M15 1l-1 3 3 1M3 14c0 5 5 8 9 6M6 22l-3-1 1-3" /><circle cx="15" cy="15" r="5.5" fill="#f28c13" stroke="none" /></svg>
    <div className="-mt-[1px] ml-[17px] flex w-[40px] flex-col items-center text-[14px] leading-[20px]"><span>ENG</span><span>IN</span></div>
    <svg width="22" height="20" viewBox="0 0 22 20" fill="none" stroke="#222" strokeWidth="1.3" className="ml-[17px] shrink-0"><path d="M1 7c6-6 14-6 20 0M4 11c4-4 10-4 14 0M7 14c2-2 6-2 8 0" /><circle cx="11" cy="18" r="1.2" fill="#222" /></svg>
    <svg width="20" height="20" viewBox="0 0 20 20" fill="none" stroke="#222" strokeWidth="1.2" className="ml-[9px] shrink-0"><path d="M1 7h3l5-5v16l-5-5H1zM12 7c1 2 1 4 0 6M15 4c2 4 2 8 0 12M17.5 2c3 5 3 11 0 16" /></svg>
    <svg width="22" height="20" viewBox="0 0 22 20" fill="none" stroke="#222" strokeWidth="1.3" className="ml-[9px] shrink-0"><rect x="2" y="5" width="16" height="11" rx="2" /><path d="M20 8v5" /><path d="M8 1L5 9h4l-2 8" strokeWidth="1.8" /><rect x="11" y="7" width="5" height="7" fill="#222" stroke="none" /></svg>
    <div className="mr-[23px] -mt-[2px] ml-auto flex flex-col items-end text-[14px] leading-[20px]"><span>3:09 PM</span><span>4/12/2025</span></div>
  </div>
)

export default function App() {
  return (
    <div className="h-[1080px] w-[1920px] overflow-hidden bg-[linear-gradient(90deg,#e9eef3_0%,#ebeef3_50%,#eee9f0_100%)] font-['Open_Sans',sans-serif]">
      <TitleBar />
      <MenuBar />
      <Ribbon />
      <FormulaBar />
      <div className="mt-[9px] flex">
        <div className="w-[1894px] shrink-0">
          <ColHeader />
          <Sheet />
        </div>
        <VScroll />
      </div>
      <Tabs />
      <StatusBar />
      <Taskbar />
    </div>
  )
}
